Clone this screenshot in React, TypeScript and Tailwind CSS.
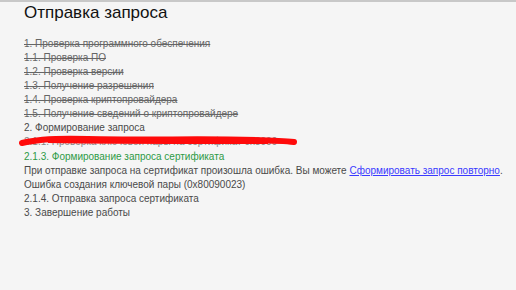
export default function App() {
  const done = [
    "1. Проверка программного обеспечения",
    "1.1. Проверка ПО",
    "1.2. Проверка версии",
    "1.3. Получение разрешения",
    "1.4. Проверка криптопровайдера",
    "1.5. Получение сведений о криптопровайдере",
  ];

  return (
    <div className="w-[516px] h-[290px] bg-[#f5f5f5] border-t-2 border-[#c8c8c8] font-['Liberation_Sans',Arial,sans-serif] overflow-hidden">
      <div className="pl-6 pt-[1px]">
        <h1 className="text-[17px] leading-[20px] text-[#111]">Отправка запроса</h1>
        <div className="mt-[14px] text-[10px] leading-[14px] text-[#4a4a4a]">
          {done.map((t) => (
            <div key={t} className="line-through text-[#666]">
              {t}
            </div>
          ))}
          <div>2. Формирование запроса</div>
          <div className="relative h-[14px]">
            <span className="text-[#888]">2.1.1. Проверка ключевой пары на сертификат 0x8009</span>
            <svg
              className="absolute left-[-6px] top-[-1px]"
              width="282"
              height="14"
              viewBox="0 0 282 14"
            >
              <path
                d="M4 9 C 20 5, 40 4, 70 5 C 120 6, 170 5, 210 5.5 C 240 6, 262 6.5, 276 8"
                stroke="#ff0a0a"
                strokeWidth="6"
                strokeLinecap="round"
                fill="none"
              />
              <path
                d="M30 7 C 90 8, 160 8, 250 8"
                stroke="#ff0a0a"
                strokeWidth="4"
                fill="none"
              />
            </svg>
          </div>
          <div className="text-[#2e9a46] mt-[1px]">2.1.3. Формирование запроса сертификата</div>
          <div>
            При отправке запроса на сертификат произошла ошибка. Вы можете{" "}
            <a href="#" className="text-[#3a3aff] underline">
              Сформировать запрос повторно
            </a>
            .
          </div>
          <div>Ошибка создания ключевой пары (0x80090023)</div>
          <div>2.1.4. Отправка запроса сертификата</div>
          <div>3. Завершение работы</div>
        </div>
      </div>
    </div>
  );
}
